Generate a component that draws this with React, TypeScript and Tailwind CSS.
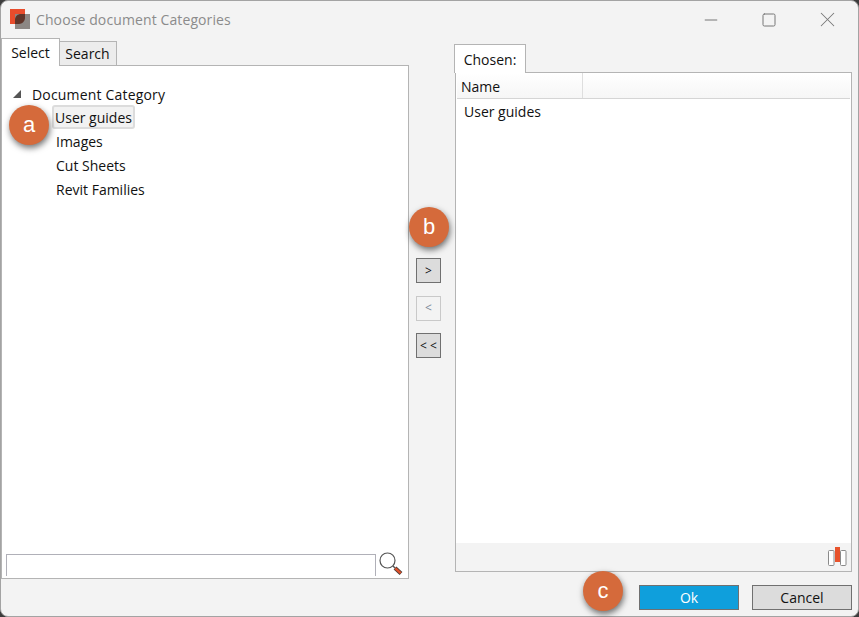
import { Minus, Square, X } from "lucide-react";

const font = "[font-family:'Open_Sans','Liberation_Sans',sans-serif]";

function Badge({ label, className }: { label: string; className: string }) {
  return (
    <div
      className={`absolute flex h-10 w-10 items-center justify-center rounded-full bg-[#d56a3b] pb-[1px] text-[22px] text-white shadow-[1px_3px_6px_rgba(0,0,0,0.55)] [font-family:'Liberation_Sans',sans-serif] ${className}`}
    >
      {label}
    </div>
  );
}

function MoveButton({ label, disabled }: { label: string; disabled?: boolean }) {
  return (
    <div
      className={`flex h-[25px] w-[25px] items-center justify-center border text-[12px] ${
        disabled ? "border-[#c9c9c9] bg-[#f3f3f3] text-[#7f8a99]" : "border-[#707070] bg-[#dcdcdc] text-[#111]"
      }`}
    >
      {label}
    </div>
  );
}

function AppIcon() {
  return (
    <svg width="21" height="21" viewBox="0 0 21 21" className="shrink-0">
      <rect x="0" y="0" width="15" height="15" fill="#e84c2c" />
      <rect x="5" y="5" width="15" height="15" fill="#8c8784" />
      <path d="M5 15 V11 C5 7 8 5 11 5 H15 V9 C15 12 12 15 9 15 Z" fill="#5f3429" />
    </svg>
  );
}

function SearchIcon() {
  return (
    <svg width="24" height="24" viewBox="0 0 24 24" className="shrink-0">
      <circle cx="8.5" cy="8.5" r="7.5" fill="#fff" stroke="#555" strokeWidth="1.2" />
      <path d="M14 14 L16 16" stroke="#555" strokeWidth="1.5" />
      <path d="M16 16 L22 21.5" stroke="#4a3a34" strokeWidth="4" />
      <path d="M16.3 16.3 L21.7 21.2" stroke="#e0502a" strokeWidth="2.4" />
    </svg>
  );
}

function ColumnsIcon() {
  return (
    <svg width="19" height="20" viewBox="0 0 19 20">
      <rect x="0.5" y="3.5" width="5.5" height="15" rx="1" fill="#fff" stroke="#8a8a8a" />
      <rect x="12.5" y="3.5" width="5.5" height="15" rx="1" fill="#fff" stroke="#8a8a8a" />
      <rect x="7" y="0" width="5" height="15" fill="#e8532c" />
    </svg>
  );
}

export default function App() {
  return (
    <div className={`relative h-[617px] w-[859px] overflow-hidden bg-[#3c3c3c] text-[14px] text-[#111] ${font}`}>
      <div className="flex h-full flex-col rounded-[8px] border border-[#a3a3a3] bg-[#f3f3f3]">
        {/* title bar */}
        <div className="flex h-[37px] shrink-0 items-center pl-[9px]">
          <AppIcon />
          <span className="ml-[5px] tracking-[0.11px] text-[#8b8b8b]">Choose document Categories</span>
          <div className="ml-auto flex h-full items-center pr-[2px] text-[#777]">
            <div className="flex w-[58px] justify-center"><Minus size={20} strokeWidth={1.2} /></div>
            <div className="flex w-[58px] justify-center"><Square size={16} strokeWidth={1.5} /></div>
            <div className="flex w-[58px] justify-center"><X size={25} strokeWidth={1} /></div>
          </div>
        </div>

        <div className="flex h-[541px] shrink-0">
          {/* left pane */}
          <div className="flex w-[408px] shrink-0 flex-col">
            <div className="relative z-10 flex h-[28px] shrink-0 items-end">
              <div className="flex h-[28px] w-[59px] items-center justify-center border border-b-0 border-[#b4b4b4] bg-white">Select</div>
              <div className="flex h-[25px] w-[57px] items-center justify-center border border-l-0 border-[#b4b4b4] bg-[#ececec] pr-[1px]">Search</div>
            </div>
            <div className="-mt-px flex min-h-0 flex-1 flex-col border border-[#b4b4b4] bg-white">
              <div className="flex-1 pt-[17px]">
                <div className="flex h-[22px] items-center pl-[11px]">
                  <svg width="8" height="8" viewBox="0 0 8 8">
                    <path d="M8 0 V8 H0 Z" fill="#555" />
                  </svg>
                  <span className="ml-[11px] tracking-[0.18px]">Document Category</span>
                </div>
                <div className="flex flex-col items-start pl-[50px]">
                  <div className="flex h-[24px] items-center rounded-[3px] border-2 border-[#dcdcdc] bg-[#f2f2f2] pl-[1px] pr-[1px]">User guides</div>
                  <div className="flex h-[24px] items-center px-[4px]">Images</div>
                  <div className="flex h-[24px] items-center px-[4px]">Cut Sheets</div>
                  <div className="flex h-[24px] items-center px-[4px]">Revit Families</div>
                </div>
              </div>
              <div className="flex h-[25px] items-start pl-[4px]">
                <div className="mt-[1px] h-[22px] w-[370px] border border-b-0 border-[#b0b0b8]" />
                <div className="ml-[3px] -mt-px"><SearchIcon /></div>
              </div>
            </div>
          </div>

          {/* move buttons */}
          <div className="flex w-[46px] shrink-0 flex-col items-start pl-[7px] pt-[220px]">
            <div className="flex flex-col gap-[12.5px]">
              <MoveButton label=">" />
              <MoveButton label="<" disabled />
              <MoveButton label="< <" />
            </div>
          </div>

          {/* right pane */}
          <div className="mb-[7px] flex w-[397px] shrink-0 flex-col pt-[6px]">
            <div className="relative z-10 -ml-px flex h-[29px] w-[72px] shrink-0 items-center justify-center border border-b-0 border-[#b4b4b4] bg-white">
              Chosen:
            </div>
            <div className="-mt-px flex min-h-0 flex-1 flex-col border border-[#b4b4b4] bg-white">
              <div className="mx-[1px] flex h-[26px] shrink-0 border-b border-[#d5d5d5] bg-gradient-to-b from-white to-[#f6f6f6]">
                <div className="flex w-[126px] items-center border-r border-[#dedede] pl-[4px] pt-[1px]">Name</div>
              </div>
              <div className="flex-1 pl-[8px] pt-[2px]">User guides</div>
              <div className="flex h-[28px] shrink-0 items-center justify-end bg-[#f3f3f3] pr-[4px]">
                <ColumnsIcon />
              </div>
            </div>
          </div>
        </div>

        {/* footer */}
        <div className="flex flex-1 items-start justify-end gap-[13px] pr-[6px] pt-[6px]">
          <div className="flex h-[25px] w-[100px] items-center justify-center border border-[#707070] bg-[#0f9fdc] text-white">Ok</div>
          <div className="flex h-[25px] w-[100px] items-center justify-center border border-[#707070] bg-[#dcdcdc]">Cancel</div>
        </div>
      </div>

      <Badge label="a" className="left-[9px] top-[105px]" />
      <Badge label="b" className="left-[409px] top-[207px]" />
      <Badge label="c" className="left-[583px] top-[571px]" />
    </div>
  );
}
